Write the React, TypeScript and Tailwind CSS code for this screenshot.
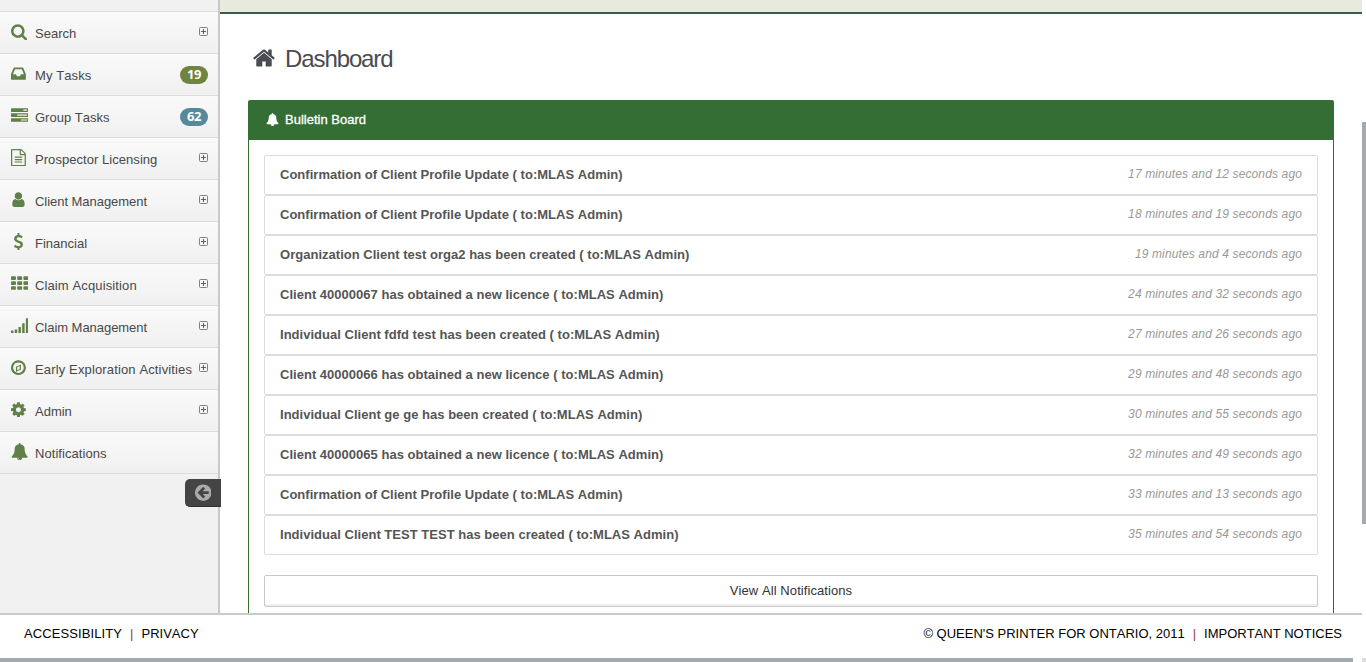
import React from "react";

type Glyph = { box: string; w: number; d: string };

const ICONS: Record<string, Glyph> = {
  search: { box: "64 0 1664 1792", w: 16.1, d: "M1216 832q0-185-131.5-316.5t-316.5-131.5-316.5 131.5-131.5 316.5 131.5 316.5 316.5 131.5 316.5-131.5 131.5-316.5zm512 832q0 52-38 90t-90 38q-54 0-90-38l-343-342q-179 124-399 124-143 0-273.5-55.5t-225-150-150-225-55.5-273.5 55.5-273.5 150-225 225-150 273.5-55.5 273.5 55.5 225 150 150 225 55.5 273.5q0 220-124 399l343 343q37 37 37 90z" },
  inbox: { box: "128 0 1536 1792", w: 14.86, d: "M1151 960h316q-1-3-2.5-8.5t-2.5-7.5l-212-496h-708l-212 496q-1 3-2.5 8.5t-2.5 7.5h316l95 192h320zm513 30v482q0 26-19 45t-45 19h-1408q-26 0-45-19t-19-45v-482q0-62 25-123l238-552q10-25 36.5-42t52.5-17h832q26 0 52.5 17t36.5 42l238 552q25 61 25 123z" },
  tasks: { box: "0 0 1792 1792", w: 17.33, d: "M1024 1408h640v-128h-640v128zm-384-512h1024v-128h-1024v128zm640-512h384v-128h-384v128zm512 832v256q0 26-19 45t-45 19h-1664q-26 0-45-19t-19-45v-256q0-26 19-45t45-19h1664q26 0 45 19t19 45zm0-512v256q0 26-19 45t-45 19h-1664q-26 0-45-19t-19-45v-256q0-26 19-45t45-19h1664q26 0 45 19t19 45zm0-512v256q0 26-19 45t-45 19h-1664q-26 0-45-19t-19-45v-256q0-26 19-45t45-19h1664q26 0 45 19t19 45z" },
  file: { box: "128 0 1536 1792", w: 14.86, d: "M1596 380q28 28 48 76t20 88v1152q0 40-28 68t-68 28h-1344q-40 0-68-28t-28-68v-1600q0-40 28-68t68-28h896q40 0 88 20t76 48zm-444-244v376h376q-10-29-22-41l-313-313q-12-12-41-22zm384 1528v-1024h-416q-40 0-68-28t-28-68v-416h-768v1536h1280zm-1024-864q0-14 9-23t23-9h704q14 0 23 9t9 23v64q0 14-9 23t-23 9h-704q-14 0-23-9t-9-23v-64zm736 224q14 0 23 9t9 23v64q0 14-9 23t-23 9h-704q-14 0-23-9t-9-23v-64q0-14 9-23t23-9h704zm0 256q14 0 23 9t9 23v64q0 14-9 23t-23 9h-704q-14 0-23-9t-9-23v-64q0-14 9-23t23-9h704z" },
  user: { box: "128 0 1536 1792", w: 14.86, d: "M1536 1399q0 109-62.5 187t-150.5 78h-854q-88 0-150.5-78t-62.5-187q0-85 8.5-160.5t31.5-152 58.5-131 94-89 134.5-34.5q131 128 313 128t313-128q76 0 134.5 34.5t94 89 58.5 131 31.5 152 8.5 160.5zm-256-887q0 159-112.5 271.5t-271.5 112.5-271.5-112.5-112.5-271.5 112.5-271.5 271.5-112.5 271.5 112.5 112.5 271.5z" },
  dollar: { box: "128 0 1536 1792", w: 14.86, d: "M1362 1185q0 153-99.5 263.5t-258.5 136.5v175q0 14-9 23t-23 9h-135q-13 0-22.5-9.5t-9.5-22.5v-175q-66-9-127.5-31t-101.5-44.5-74-48-46.5-37.5-17.5-18q-17-21-2-41l103-135q7-10 23-12 15-2 24 9l2 2q113 99 243 125 37 8 74 8 81 0 142.5-43t61.5-122q0-28-15-53t-33.5-42-58.5-37.5-66-32-80-32.5q-39-16-61.5-25t-61.5-26.5-62.5-31-56.5-35.5-53.5-42.5-43.5-49-35.5-58-21-66.5-8.5-78q0-138 98-242t255-134v-180q0-13 9.5-22.5t22.5-9.5h135q14 0 23 9t9 23v176q57 6 110.5 23t87 33.5 63.5 37.5 39 29 15 14q17 18 5 38l-81 146q-8 15-23 16-14 3-27-7-3-3-14.5-12t-39-26.5-58.5-32-74.5-26-85.5-11.5q-95 0-155 43t-60 111q0 26 8.5 48t29.5 41.5 39.5 33 56 31 60.5 27 70 27.5q53 20 81 31.5t76 35 75.5 42.5 62 50 53 63.5 31.5 76.5 13 94z" },
  grid: { box: "0 0 1792 1792", w: 17.33, d: [0, 640, 1280].map((x) => [128, 640, 1152].map((y) => `M${x + 96} ${y}h320q40 0 68 28t28 68v192q0 40-28 68t-68 28h-320q-40 0-68-28t-28-68v-192q0-40 28-68t68-28z`).join("")).join("") },
  signal: { box: "0 0 1792 1792", w: 17.33, d: [256, 384, 640, 1024, 1536].map((h, i) => `M${i * 384 + 32} ${1664 - h}h192q32 0 32 32v${h - 64}q0 32-32 32h-192q-32 0-32-32v-${h - 64}q0-32 32-32z`).join("") },
  compass: { box: "128 0 1536 1792", w: 14.86, d: "M768 1152l256-128v-310l-256 128v310zm384-596v542l-512 256v-542zm288 340q0-148-73-273t-198-198-273-73-273 73-198 198-73 273 73 273 198 198 273 73 273-73 198-198 73-273zm224 0q0 209-103 385.5t-279.5 279.5-385.5 103-385.5-103-279.5-279.5-103-385.5 103-385.5 279.5-279.5 385.5-103 385.5 103 279.5 279.5 103 385.5z" },
  cog: { box: "128 0 1536 1792", w: 14.86, d: "M1152 896q0-106-75-181t-181-75-181 75-75 181 75 181 181 75 181-75 75-181zm512-109v222q0 12-8 23t-20 13l-185 28q-19 54-39 91 35 50 107 138 10 12 10 25t-9 23q-27 37-99 108t-94 71q-12 0-26-9l-138-108q-44 23-91 38-16 136-29 186-7 28-36 28h-222q-14 0-24.5-8.5t-11.5-21.5l-28-184q-49-16-90-37l-141 107q-10 9-25 9-14 0-25-11-126-114-165-168-7-10-7-23 0-12 8-23 15-21 51-66.5t54-70.5q-27-50-41-99l-183-27q-13-2-21-12.5t-8-23.5v-222q0-12 8-23t19-13l186-28q14-46 39-92-40-57-107-138-10-12-10-24 0-10 9-23 26-36 98.5-107.5t94.5-71.5q13 0 26 10l138 107q44-23 91-38 16-136 29-186 7-28 36-28h222q14 0 24.5 8.5t11.5 21.5l28 184q49 16 90 37l142-107q9-9 24-9 13 0 25 10 129 119 165 170 7 8 7 22 0 12-8 23-15 21-51 66.5t-54 70.5q26 50 41 98l183 28q13 2 21 12.5t8 23.5z" },
  bell: { box: "0 0 1792 1792", w: 17.33, d: "M912 1696q0-16-16-16-59 0-101.5-42.5t-42.5-101.5q0-16-16-16t-16 16q0 73 51.5 124.5t124.5 51.5q16 0 16-16zm816-288q0 52-38 90t-90 38h-448q0 106-75 181t-181 75-181-75-75-181h-448q-52 0-90-38t-38-90q50-42 91-88t85-119.5 74.5-158.5 50-206 19.5-260q0-152 117-282.5t307-158.5q-8-19-8-39 0-40 28-68t68-28 68 28 28 68q0 20-8 39 190 28 307 158.5t117 282.5q0 139 19.5 260t50 206 74.5 158.5 85 119.5 91 88z" },
  home: { box: "0 0 1792 1792", w: 24, d: "M1472 992v480q0 26-19 45t-45 19h-384v-384h-256v384h-384q-26 0-45-19t-19-45v-480q0-1 .5-3t.5-3l575-474 575 474q1 2 1 6zm223-69l-62 74q-8 9-21 11h-3q-13 0-21-7l-692-577-692 577q-12 8-24 7-13-2-21-11l-62-74q-8-10-7-23.5t11-21.5l719-599q32-26 76-26t76 26l244 204v-195q0-14 9-23t23-9h192q14 0 23 9t9 23v408l219 182q10 8 11 21.5t-7 23.5z" },
  back: { box: "128 0 1536 1792", w: 17, d: "M1408 960v-128q0-26-19-45t-45-19h-502l189-189q19-19 19-45t-19-45l-91-91q-18-18-45-18t-45 18l-362 362-91 91q-18 18-18 45t18 45l91 91 362 362q18 18 45 18t45-18l91-91q18-18 18-45t-18-45l-189-189h502q26 0 45-19t19-45zm256-64q0 209-103 385.5t-279.5 279.5-385.5 103-385.5-103-279.5-279.5-103-385.5 103-385.5 279.5-279.5 385.5-103 385.5 103 279.5 279.5 103 385.5z" },
};

function Icon({ name, width, className }: { name: string; width?: number; className?: string }) {
  const g = ICONS[name];
  const [, , bw, bh] = g.box.split(" ").map(Number);
  const w = width ?? g.w;
  return (
    <svg viewBox={g.box} width={w} height={(w * bh) / bw} fill="currentColor" className={className} aria-hidden="true">
      <path d={g.d} />
    </svg>
  );
}

function Expand() {
  return (
    <svg width="10" height="10" viewBox="0 0 10 10" fill="none" className="mt-[15px] mr-[9px] shrink-0" aria-hidden="true">
      <rect x="0.5" y="0.5" width="8" height="8" rx="1" stroke="#808080" />
      <path d="M2 4.5h5M4.5 2v5" stroke="#606060" />
    </svg>
  );
}

type Item = { icon: string; label: string; badge?: string; badgeClass?: string; leaf?: boolean; tracking?: string };

const MENU: Item[] = [
  { icon: "search", label: "Search" },
  { icon: "inbox", label: "My Tasks", badge: "19", badgeClass: "bg-[#70833f]", tracking: "tracking-[0.1px]" },
  { icon: "tasks", label: "Group Tasks", badge: "62", badgeClass: "bg-[#57889c]" },
  { icon: "file", label: "Prospector Licensing", tracking: "tracking-[0.05px]" },
  { icon: "user", label: "Client Management", tracking: "tracking-[-0.04px]" },
  { icon: "dollar", label: "Financial" },
  { icon: "grid", label: "Claim Acquisition", tracking: "tracking-[0.12px]" },
  { icon: "signal", label: "Claim Management", tracking: "tracking-[-0.04px]" },
  { icon: "compass", label: "Early Exploration Activities", tracking: "tracking-[0.14px]" },
  { icon: "cog", label: "Admin" },
  { icon: "bell", label: "Notifications", leaf: true, tracking: "tracking-[0.06px]" },
];

const BULLETINS: [string, string][] = [
  ["Confirmation of Client Profile Update ( to:MLAS Admin)", "17 minutes and 12 seconds ago"],
  ["Confirmation of Client Profile Update ( to:MLAS Admin)", "18 minutes and 19 seconds ago"],
  ["Organization Client test orga2 has been created ( to:MLAS Admin)", "19 minutes and 4 seconds ago"],
  ["Client 40000067 has obtained a new licence ( to:MLAS Admin)", "24 minutes and 32 seconds ago"],
  ["Individual Client fdfd test has been created ( to:MLAS Admin)", "27 minutes and 26 seconds ago"],
  ["Client 40000066 has obtained a new licence ( to:MLAS Admin)", "29 minutes and 48 seconds ago"],
  ["Individual Client ge ge has been created ( to:MLAS Admin)", "30 minutes and 55 seconds ago"],
  ["Client 40000065 has obtained a new licence ( to:MLAS Admin)", "32 minutes and 49 seconds ago"],
  ["Confirmation of Client Profile Update ( to:MLAS Admin)", "33 minutes and 13 seconds ago"],
  ["Individual Client TEST TEST has been created ( to:MLAS Admin)", "35 minutes and 54 seconds ago"],
];

function MenuRow({ item }: { item: Item }) {
  return (
    <li className="flex h-[42px] items-start border-b border-[#dcdcdc] bg-linear-to-b from-[#fafafa] to-[#f0f0f0] pl-[11px] text-[#484848]">
      <span className="mt-[11px] flex w-6 shrink-0 text-[#5f8048]">
        <Icon name={item.icon} />
      </span>
      <span className={`mt-3 flex-1 text-[13px] leading-5 whitespace-nowrap ${item.tracking ?? "tracking-normal"}`}>{item.label}</span>
      {item.badge ? (
        <span className={`mt-3 mr-[10px] h-[18px] w-7 rounded-full text-center font-['Open_Sans','Noto_Sans',sans-serif] text-[13px] leading-[17px] font-bold tracking-[-0.4px] text-white ${item.badgeClass}`}>
          {item.badge}
        </span>
      ) : item.leaf ? null : (
        <Expand />
      )}
    </li>
  );
}

export default function App() {
  return (
    <div className="flex h-[662px] w-[1366px] overflow-hidden bg-white font-['Liberation_Sans',Arial,sans-serif] [font-kerning:none]">
      <div className="flex w-[1362px] flex-col">
        <div className="flex h-[613px] overflow-hidden">
          <nav className="flex w-[220px] shrink-0 flex-col border-r-2 border-[#c9c9c9] bg-[#f1f1f1]">
            <div className="h-3 shrink-0 border-b border-[#dcdcdc] bg-[#f1f1f1]" />
            <ul>
              {MENU.map((item) => (
                <MenuRow key={item.label} item={item} />
              ))}
            </ul>
            <button className="mt-[5px] -mr-[3px] flex h-7 w-9 items-center justify-center self-end rounded-l-[5px] border-b border-[#303030] bg-[#444] text-[#aaa]">
              <Icon name="back" width={16.5} />
            </button>
          </nav>
          <main className="flex flex-1 flex-col">
            <div className="h-3.5 shrink-0 border-b-2 border-[#3c5a50] bg-[#e8eadd]" />
            <h1 className="flex h-[86px] shrink-0 items-start pl-8 text-2xl text-[#494c52]">
              <Icon name="home" className="mt-8" />
              <span className="mt-[27px] ml-[9px] leading-9 tracking-[-1.1px]">Dashboard</span>
            </h1>
            <section className="mr-7 ml-7 flex flex-1 flex-col">
              <header className="flex h-10 items-start rounded-t-[2px] bg-[#356e35] pl-[17px] text-[13px] text-white">
                <Icon name="bell" width={13} className="mt-[13px] ml-px" />
                <h2 className="mt-[10px] ml-[6px] leading-5 [-webkit-text-stroke:0.3px_white]">Bulletin Board</h2>
              </header>
              <div className="flex flex-1 flex-col border-x border-[#356e35] px-[15px] pt-[15px]">
                <ul>
                  {BULLETINS.map(([title, time], i) => (
                    <li key={i} className="flex h-10 justify-between rounded-[2px] border border-[#dcdcdc] px-[15px]">
                      <span className="mt-[9px] text-[13px] leading-5 font-bold tracking-[0.02px] text-[#555]">{title}</span>
                      <span className="mt-2 text-xs leading-5 tracking-[0.13px] text-[#999] italic">{time}</span>
                    </li>
                  ))}
                </ul>
                <button className="mt-5 flex h-8 w-full shrink-0 items-start justify-center rounded-[2px] border border-[#c8c8c8] text-[13px] leading-[29px] tracking-[0.08px] text-[#333] shadow-[inset_0_-2px_0_#f0f0f0]">
                  View All Notifications
                </button>
              </div>
            </section>
          </main>
        </div>
        <footer className="flex h-[45px] justify-between border-t-2 border-[#c9cbc9] pr-5 pl-6 text-[13px] leading-[38px] text-black">
          <div className="flex">
            <span className="tracking-[0.1px]">ACCESSIBILITY</span>
            <span className="mx-2 text-[#a04040]">|</span>
            <span>PRIVACY</span>
          </div>
          <div className="flex">
            <span>© QUEEN'S PRINTER FOR ONTARIO, 2011</span>
            <span className="mx-2 text-[#a04040]">|</span>
            <span>IMPORTANT NOTICES</span>
          </div>
        </footer>
        <div className="h-1 w-[1353px] bg-[#a4a9ae]" />
      </div>
      <div className="flex w-1 flex-col justify-between pt-[122px]">
        <div className="h-[402px] bg-[#a4a9ae]" />
        <div className="h-1 bg-[#dcdcdc]" />
      </div>
    </div>
  );
}
